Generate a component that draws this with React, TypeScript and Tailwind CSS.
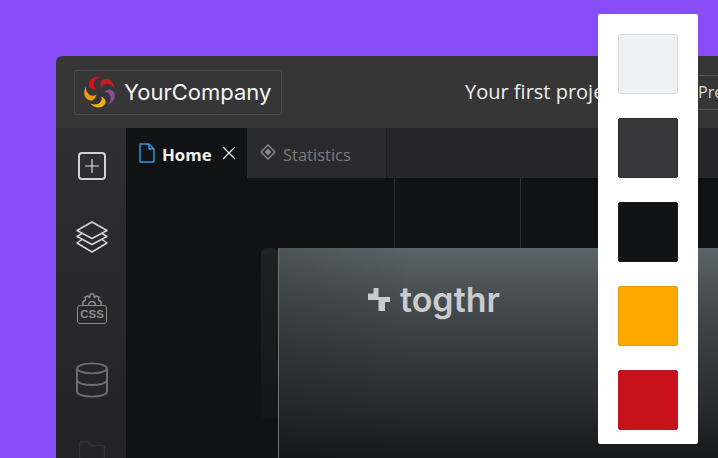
import { Database, Folder, Plus, X } from "lucide-react";

const swatches = [
  "bg-[#f0f1f3] border-[#dfe0e2]",
  "bg-[#38383a] border-[#2c2c2e]",
  "bg-[#111214] border-[#1d1e20]",
  "bg-[#ffa800] border-[#e59a0a]",
  "bg-[#c8101b] border-[#b51a28]",
];

const petals = [
  { color: "#d5131f", angle: 0 },
  { color: "#cf1a24", angle: 72 },
  { color: "#8b4a9c", angle: 144 },
  { color: "#f0b114", angle: 216 },
  { color: "#ee9a12", angle: 288 },
];

const Logo = () => (
  <svg width="34" height="34" viewBox="-17 -17 34 34">
    {petals.map((p) => (
      <path
        key={p.angle}
        transform={`rotate(${p.angle})`}
        fill={p.color}
        d="M-11 -6 C-12 -13 -5 -16.5 1 -15 C-3 -14 -7 -11 -6 -6 C-5.5 -4 -4 -3 -3 -3 C-6 -2 -10 -3 -11 -6 Z"
      />
    ))}
  </svg>
);

const LayersIcon = () => (
  <svg width="32" height="32" viewBox="0 0 32 32" fill="none" stroke="#d4d4d4" strokeWidth="1.5" strokeLinejoin="round">
    <path d="M16 1 L31 9.5 L16 17.5 L1 9.5 Z" />
    <path d="M6 12.5 L1 15.5 L16 23.5 L31 15.5 L26 12.5" />
    <path d="M6 18.5 L1 22 L16 31 L31 22 L26 18.5" />
  </svg>
);

const CssIcon = () => (
  <div className="flex flex-col items-center">
    <svg width="24" height="12" viewBox="0 0 24 12" fill="none" stroke="#8b8b8b" strokeWidth="1.5" strokeLinejoin="round">
      <path d="M3 12 V8.5 L5.5 7 L5 4 L8 3 L9.5 4.5 L10.5 1 H13.5 L14.5 4.5 L16 3 L19 4 L18.5 7 L21 8.5 V12" />
      <path d="M8.5 12 A3.5 3.5 0 0 1 15.5 12" />
    </svg>
    <div className="flex h-[19px] w-[30px] items-center justify-center rounded-[3px] border-[1.5px] border-[#8b8b8b] font-['Liberation_Sans',sans-serif] text-[11.5px] leading-none font-bold text-[#8b8b8b]">
      CSS
    </div>
  </div>
);

const Sidebar = () => (
  <div className="flex w-[70px] shrink-0 flex-col items-center bg-gradient-to-b from-[#2f2f31] to-[#232325] pt-[24px] pl-[2px]">
    <div className="flex h-[28px] w-[28px] shrink-0 items-center justify-center rounded-[4px] border-2 border-[#d2d2d2]">
      <Plus size={22} strokeWidth={1.3} color="#e0e0e0" />
    </div>
    <div className="mt-[41px] shrink-0">
      <LayersIcon />
    </div>
    <div className="mt-[40px] shrink-0">
      <CssIcon />
    </div>
    <Database size={40} strokeWidth={1.15} color="#6f6f6f" className="mt-[36px] shrink-0" />
    <Folder size={30} strokeWidth={1.1} color="#343436" className="mt-[38px] shrink-0" />
  </div>
);

const Tabs = () => (
  <div className="flex h-[50px] shrink-0 bg-[#262628]">
    <div className="flex w-[121px] shrink-0 items-center bg-[#111214] pt-[5px] pl-[13px]">
      <svg width="16" height="20" viewBox="0 0 16 20" fill="none" stroke="#2f9be0" strokeWidth="1.4" strokeLinejoin="round" className="-mt-[5px]">
        <path d="M1 1 H10 L15 6 V19 H1 Z" />
        <path d="M10 1 V6 H15" />
      </svg>
      <span className="ml-[7px] text-[16.8px] leading-none font-bold text-[#f2f2f2]">Home</span>
      <X size={22} strokeWidth={1.4} color="#e5e5e5" className="-mt-[6px] ml-[6px] shrink-0" />
    </div>
    <div className="flex w-[140px] shrink-0 items-center border-r border-[#1d1d1f] bg-[#2a2a2c] pt-[4px] pl-[13px]">
      <svg width="16" height="16" viewBox="0 0 16 16" fill="none" stroke="#8a8a8a" strokeWidth="1.4" className="-mt-[6px]">
        <path d="M8 1 L15 8 L8 15 L1 8 Z" />
        <path d="M8 5.5 L10.5 8 L8 10.5 L5.5 8 Z" fill="#8a8a8a" />
      </svg>
      <span className="ml-[7px] text-[16.5px] leading-none text-[#7d7d7d]">Statistics</span>
    </div>
  </div>
);

const Canvas = () => (
  <div className="flex flex-1 flex-col overflow-hidden bg-[#111214]">
    <div className="flex h-[70px] shrink-0 pl-[268px]">
      <div className="w-[126px] border-l border-[#2e2e30]" />
      <div className="flex-1 border-l border-[#2e2e30]" />
    </div>
    <div className="flex flex-1 pl-[135px]">
      <div className="h-[170px] w-[17px] rounded-t-[6px] bg-gradient-to-b from-[#1f2123] to-[#141517]" />
      <div className="relative flex-1 overflow-hidden border-l border-[#6d767b] bg-[linear-gradient(90deg,rgba(17,18,20,0.18),rgba(17,18,20,0)_30%),linear-gradient(180deg,#5a6468_0%,#484e52_22%,#383b3f_48%,#2b2d30_72%,#17181a_100%)] pt-[35px] pl-[89px]">
        <div className="flex items-start text-[#c9cbcd]">
          <svg width="22" height="24" viewBox="0 0 22 24" fill="currentColor" className="mt-[5px] shrink-0">
            <path d="M5.5 0 H10.5 V9 H22 V14 H17 V23 H10.5 V12 H0 V5.5 H5.5 Z" />
          </svg>
          <span className="ml-[10px] font-['Inter',sans-serif] text-[34px] leading-none font-semibold">togthr</span>
        </div>
      </div>
    </div>
  </div>
);

export default function App() {
  return (
    <div className="relative h-[458px] w-[718px] overflow-hidden bg-[#884cf8] pt-[56px] pl-[56px] font-['Open_Sans',sans-serif]">
      <div className="flex h-[402px] flex-col overflow-hidden rounded-tl-[6px] bg-[#363637]">
        <div className="flex h-[72px] shrink-0 items-center pl-[18px]">
          <div className="flex h-[45px] w-[208px] shrink-0 items-center rounded-[2px] border border-[#4a4a4b] pl-[8px]">
            <Logo />
            <span className="ml-[7px] font-['Inter',sans-serif] text-[22px] leading-none text-[#f4f4f4]">YourCompany</span>
          </div>
          <span className="ml-[183px] shrink-0 text-[20px] leading-none whitespace-nowrap text-[#eeeeee]">Your first project</span>
          <div className="ml-[68px] flex h-[35px] w-[120px] shrink-0 items-center rounded-l-[2px] border border-[#58585a] pl-[8px] text-[16px] text-[#d8d8d8]">
            Preview
          </div>
        </div>
        <div className="flex flex-1 overflow-hidden">
          <Sidebar />
          <div className="flex flex-1 flex-col overflow-hidden">
            <Tabs />
            <Canvas />
          </div>
        </div>
      </div>

      <div className="absolute top-[14px] left-[598px] flex h-[430px] w-[100px] flex-col gap-[24px] rounded-[2px] bg-white px-[20px] pt-[20px]">
        {swatches.map((s) => (
          <div key={s} className={`h-[60px] w-[60px] rounded-[2px] border-[1.5px] ${s}`} />
        ))}
      </div>
    </div>
  );
}
